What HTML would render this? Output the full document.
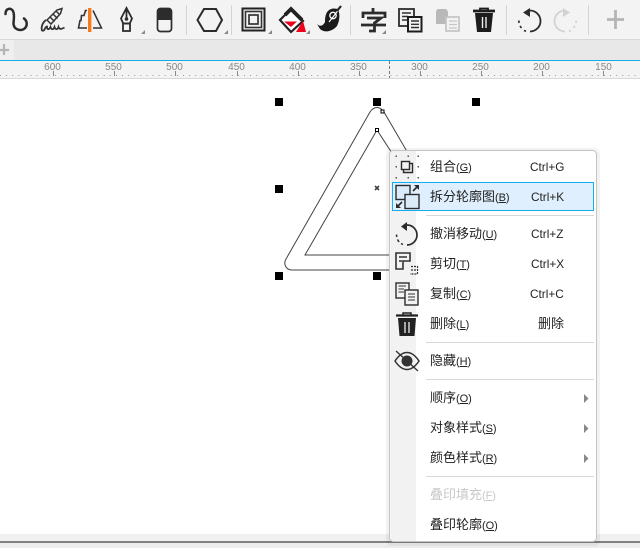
<!DOCTYPE html>
<html><head><meta charset="utf-8"><style>
html,body{margin:0;padding:0;width:640px;height:548px;overflow:hidden;background:#eee}
#s{position:absolute;left:0;top:0}
.t{position:absolute;left:430px;font:13px/18px "Liberation Sans","Noto Sans CJK SC",sans-serif;color:#222;white-space:nowrap}
.t span{font-size:11px;letter-spacing:-.1px}
.k{position:absolute;font:11.8px/18px "Liberation Sans","Noto Sans CJK SC",sans-serif;color:#222;white-space:nowrap}
</style></head><body>
<svg id="s" width="640" height="548" viewBox="0 0 640 548" fill="none" xmlns="http://www.w3.org/2000/svg">
<rect width="640" height="39" fill="#f3f3f3"/>
<rect y="39" width="640" height="1" fill="#d8d8d8"/>
<rect y="40" width="640" height="20" fill="#e8e8e8"/>
<rect y="40" width="14" height="20" fill="#efefef"/>
<path d="M4 44V55M-1 50H9" stroke="#b5b5b5" stroke-width="2.2"/>
<rect y="60" width="640" height="1.5" fill="#12aef0"/>
<rect y="61" width="640" height="17" fill="#f3f3f3"/>
<rect y="78" width="640" height="1" fill="#d9d9d9"/>
<rect y="79" width="640" height="455" fill="#fff"/>
<rect y="534" width="640" height="7" fill="#f0f0f0"/>
<rect y="541" width="640" height="2" fill="#808080"/>
<rect y="543" width="640" height="5" fill="#ececec"/>
<!-- ruler -->
<g stroke="#8a8a8a"><path d="M53.500 71V76M114.500 71V76M175.500 71V76M237.500 71V76M298.500 71V76M359.500 71V76M420.500 71V76M481.500 71V76M542.500 71V76M603.500 71V76"/></g>
<path d="M0 75.500H640" stroke="#9a9a9a" stroke-dasharray="1 5.1"/>
<path d="M389.500 61V78" stroke="#777" stroke-dasharray="3 2"/>
<g font-family="Liberation Sans,sans-serif" font-size="10" fill="#888" text-anchor="middle">
<text x="52.500" y="70">600</text><text x="113.500" y="70">550</text><text x="174.500" y="70">500</text><text x="236.500" y="70">450</text><text x="297.500" y="70">400</text><text x="358.500" y="70">350</text><text x="419.500" y="70">300</text><text x="480.500" y="70">250</text><text x="541.500" y="70">200</text><text x="603.500" y="70">150</text>
</g>
<!-- separators -->
<path d="M186.500 5V35M231.500 5V35M350.500 5V35M506.500 5V35M588.500 5V35" stroke="#d4d4d4"/>
<!-- toolbar icons -->
<path d="M5.500 14C5.500 8 11 7.500 13 11C15 15 13.500 20 13.500 24C14 29 19 31 23 29.500C27.500 27.500 28 21.500 24 18.500" stroke="#2c2c2c" stroke-width="2.500" stroke-linecap="round"/>
<g stroke="#333">
<path d="M47 20L57 10L62 8.500L60.500 13.500L51 24ZM50 17L54.500 21.500M53 14L57.500 18.500M56 11L60 15" stroke-width="1.500"/>
<path d="M46 20C42 23 41 28 42 30.500C45 32 45 26 47 26.500C47 30 49 30 50.500 27C51.500 30 53.500 30 54.500 27C55.500 30 57.500 30 58.500 27C59.500 30 61.500 29 64.500 27.500" stroke-width="1.800"/>
</g>
<path d="M87 10.500H85.500L84 15.500H81.500L81 20.500H80L78.500 28H87" stroke="#333" stroke-width="1.600"/>
<path d="M93 10.500L101.500 28H93" stroke="#333" stroke-width="1.500"/>
<rect x="88" y="8" width="3.400" height="24" fill="#f47a1c"/>
<path d="M126.500 8L132 18.500L129.800 23.500H123.200L121 18.500ZM126.500 10V18" stroke="#2c2c2c" stroke-width="1.800"/>
<circle cx="126.500" cy="19" r="1.800" fill="#2c2c2c"/>
<rect x="123" y="23.500" width="7" height="7.500" stroke="#2c2c2c" stroke-width="1.800"/>
<path d="M157 19V11C157 9.500 158 8 160 8H169C170.500 8 171.500 9.500 171.500 11V20H157Z" fill="#2c2c2c"/>
<rect x="157.500" y="8.500" width="14" height="23" rx="3" stroke="#2c2c2c" stroke-width="1.700"/>
<path d="M197.500 20L204 9H216L222 20L216 31H204Z" stroke="#2c2c2c" stroke-width="2"/>
<rect x="242.500" y="8.500" width="22" height="22" stroke="#222" stroke-width="2"/>
<rect x="245.500" y="11.500" width="16" height="16" stroke="#333" stroke-width="1.600"/>
<rect x="249" y="15" width="9" height="9" stroke="#333" stroke-width="1.700"/>
<path d="M280 20L291 9L303 21L291 32Z" stroke="#222" stroke-width="2.200" fill="#fff"/>
<path d="M285 15L291 9L302 20" stroke="#222" stroke-width="3.800"/>
<path d="M284 21.500H297L291 27Z" fill="#e8001c"/>
<path d="M303 21L306 32H296Z" fill="#f0001c"/>
<path d="M317 24C320 27 323 26 325 22C325 16 326 11 331 9C334 8 337 9 338 9C340 14 340 20 337 26C332 32 324 33 320 29Z" fill="#1a1a1a"/>
<circle cx="333" cy="15.500" r="3.200" fill="#1a1a1a" stroke="#fff" stroke-width="1.300"/>
<path d="M329 22L340 8" stroke="#fff" stroke-width="1.100"/>
<path d="M341 6L337 11" stroke="#222" stroke-width="2.200"/>
<path d="M373 8V12M363 18V13H385V18M367 18H381L374.500 23V31H369M361 25H386" stroke="#2c2c2c" stroke-width="2.800"/>
<rect x="399" y="9" width="15" height="17" fill="#f3f3f3" stroke="#2c2c2c" stroke-width="1.800"/>
<path d="M402 13H411M402 16.500H408M402 20H408" stroke="#333" stroke-width="1.400"/>
<rect x="408" y="17" width="13.500" height="14.500" fill="#f3f3f3" stroke="#1c1c1c" stroke-width="2"/>
<path d="M411 21H419M411 24.300H419M411 27.500H419" stroke="#333" stroke-width="1.400"/>
<path d="M436 13C436 10 437 9 439 9H445C447 9 448 11 448 13V24H436Z" fill="#b9b9b9"/>
<rect x="446" y="17" width="13" height="14" fill="#f3f3f3" stroke="#c4c4c4" stroke-width="1.700"/>
<path d="M449 21H457M449 24.500H457M449 28H457" stroke="#c6c6c6" stroke-width="1.200"/>
<path d="M473 11H495" stroke="#1c1c1c" stroke-width="2.800"/>
<path d="M480 10V8.500H488V10" stroke="#1c1c1c" stroke-width="1.800"/>
<path d="M475 13H493L491 32H477Z" fill="#1c1c1c"/>
<path d="M482.500 17V28M486 17V28" stroke="#eee" stroke-width="1.400"/>
<path d="M530 10.500A10.500 10.500 0 0 1 530 31.500" stroke="#2c2c2c" stroke-width="1.800"/>
<path d="M530 8V17L523 12.500Z" fill="#2c2c2c"/>
<path d="M524 30.500L526 31.300M520 26L521.500 28M518.800 20.500L519 23" stroke="#2c2c2c" stroke-width="1.600"/>
<path d="M565 10.500A10.500 10.500 0 0 0 565 31.500" stroke="#d2d2d2" stroke-width="1.800"/>
<path d="M563 8V17L570 12.500Z" fill="#d2d2d2"/>
<path d="M571 30.500L569 31.300M575 26L573.500 28M576.200 20.500L576 23" stroke="#d2d2d2" stroke-width="1.600"/>
<path d="M615.500 10V29M607 19.500H624" stroke="#b5b5b5" stroke-width="2.800"/>
<g fill="#888"><path d="M145 34V30L141 34ZM228 34V30L224 34ZM272 34V30L268 34ZM310 34V30L306 34ZM386 34V30L382 34Z"/></g>
<!-- triangle -->
<path d="M370 112C374 106 380 106 384 112L416 167L416 270H292C286 270 283 264 286 259Z" stroke="#444" fill="#fff"/>
<path d="M377 130L305 255H416V190Z" stroke="#444"/>
<g fill="#000"><rect x="275" y="98" width="8" height="8"/><rect x="373" y="98" width="8" height="8"/><rect x="472" y="98" width="8" height="8"/><rect x="275" y="185" width="8" height="8"/><rect x="275" y="272" width="8" height="8"/><rect x="373" y="272" width="8" height="8"/></g>
<rect x="381" y="110" width="3" height="3" stroke="#000" fill="#fff"/>
<rect x="375.500" y="128.500" width="3" height="3" stroke="#000" fill="#fff"/>
<path d="M375 186L379 190M379 186L375 190" stroke="#444" stroke-width="1.600"/>
<!-- menu -->
<rect x="386" y="148" width="214" height="398" rx="6" fill="#000" opacity=".05"/>
<rect x="389.500" y="150.500" width="207" height="391" rx="4" fill="#fff" stroke="#c4c4c4"/>
<path d="M390.500 155C390.500 152.500 392 151 394 151H416V541H394C392 541 390.500 539.500 390.500 537Z" fill="#f2f2f2"/>
<rect x="392.500" y="182.500" width="201" height="28" fill="#e0effd" stroke="#12aef0"/>
<path d="M426 215.500H594M426 342.500H594M426 379.500H594M426 476.500H594" stroke="#d8d8d8"/>
<g fill="#555"><path d="M395.500 155.500h1.500v1.500h-1.500zM407.500 155.500h1.500v1.500h-1.500zM417.500 155.500h1.500v1.500h-1.500zM395.500 166h1.500v1.500h-1.500zM417.500 166h1.500v1.500h-1.500zM395.500 177h1.500v1.500h-1.500zM407.500 177h1.500v1.500h-1.500zM417.500 177h1.500v1.500h-1.500z"/></g>
<path d="M403.500 169.500V172.500H412.500V163.500H409.500" stroke="#2c2c2c" stroke-width="1.400"/>
<rect x="401.500" y="161.500" width="8" height="8" fill="#f2f2f2" stroke="#2c2c2c" stroke-width="1.400"/>
<rect x="396" y="185.500" width="14" height="14" fill="#dcebfa" stroke="#2c2c2c" stroke-width="1.400"/>
<rect x="405" y="194.500" width="14" height="14" fill="#dcebfa" stroke="#2c2c2c" stroke-width="1.400"/>
<path d="M413 191L417 187" stroke="#2c2c2c" stroke-width="1.700"/><path d="M414 185H419V190Z" fill="#2c2c2c"/>
<path d="M398 206L402 202" stroke="#2c2c2c" stroke-width="1.700"/><path d="M396 203V208H401Z" fill="#2c2c2c"/>
<path d="M407 225A10 10 0 0 1 407 245" stroke="#2c2c2c" stroke-width="1.700"/>
<path d="M407 222V231L401 226.500Z" fill="#2c2c2c"/>
<path d="M401 243.500L403 244.500M397.500 239.500L399 242M396.500 234.500L396.700 237" stroke="#2c2c2c" stroke-width="1.500"/>
<path d="M396 253H410V261H403V269H396ZM399 257H407M399 261H402" stroke="#333" stroke-width="1.600"/>
<path d="M411 266.500H417.500V274H410M411 270H417" stroke="#333" stroke-width="1.200" stroke-dasharray="2 1"/>
<rect x="396" y="283" width="13" height="15" fill="#f2f2f2" stroke="#2c2c2c" stroke-width="1.400"/>
<path d="M398.500 286H406M398.500 289H404M398.500 292H404" stroke="#333"/>
<rect x="405" y="290" width="13" height="15" fill="#f2f2f2" stroke="#2c2c2c" stroke-width="1.400"/>
<path d="M408 294H415M408 297H415M408 300H415" stroke="#333"/>
<path d="M396 315.500H418" stroke="#222" stroke-width="2.200"/>
<path d="M403 315V313H411V315" stroke="#222" stroke-width="1.500"/>
<path d="M398 318H416L414.500 336H399.500Z" fill="#222"/>
<path d="M405 322V333M409 322V333" stroke="#eee" stroke-width="1.300"/>
<path d="M395 361C399 355 403 352.500 407 352.500C411 352.500 415 355 419 361C415 367 411 369.500 407 369.500C403 369.500 399 367 395 361Z" stroke="#333" stroke-width="1.500"/>
<circle cx="407" cy="361" r="5.500" fill="#333"/>
<path d="M396 351L418 371" stroke="#333" stroke-width="1.300"/>
<path d="M584 394L588.500 398.500L584 403ZM584 424L588.500 428.500L584 433ZM584 454L588.500 458.500L584 463Z" fill="#888"/>
</svg>
<div class="t" style="top:158px">组合<span>(<u>G</u>)</span></div><div class="k" style="left:530px;top:158px">Ctrl+G</div>
<div class="t" style="top:188px">拆分轮廓图<span>(<u>B</u>)</span></div><div class="k" style="left:531px;top:188px">Ctrl+K</div>
<div class="t" style="top:225px">撤消移动<span>(<u>U</u>)</span></div><div class="k" style="left:531px;top:225px">Ctrl+Z</div>
<div class="t" style="top:255px">剪切<span>(<u>T</u>)</span></div><div class="k" style="left:531px;top:255px">Ctrl+X</div>
<div class="t" style="top:285px">复制<span>(<u>C</u>)</span></div><div class="k" style="left:530px;top:285px">Ctrl+C</div>
<div class="t" style="top:315px">删除<span>(<u>L</u>)</span></div><div class="t" style="left:538px;top:315px">删除</div>
<div class="t" style="top:352px">隐藏<span>(<u>H</u>)</span></div>
<div class="t" style="top:389px">顺序<span>(<u>O</u>)</span></div>
<div class="t" style="top:419px">对象样式<span>(<u>S</u>)</span></div>
<div class="t" style="top:449px">颜色样式<span>(<u>R</u>)</span></div>
<div class="t" style="top:486px;color:#c8c8c8">叠印填充<span>(<u>F</u>)</span></div>
<div class="t" style="top:516px">叠印轮廓<span>(<u>O</u>)</span></div>
</body></html>
